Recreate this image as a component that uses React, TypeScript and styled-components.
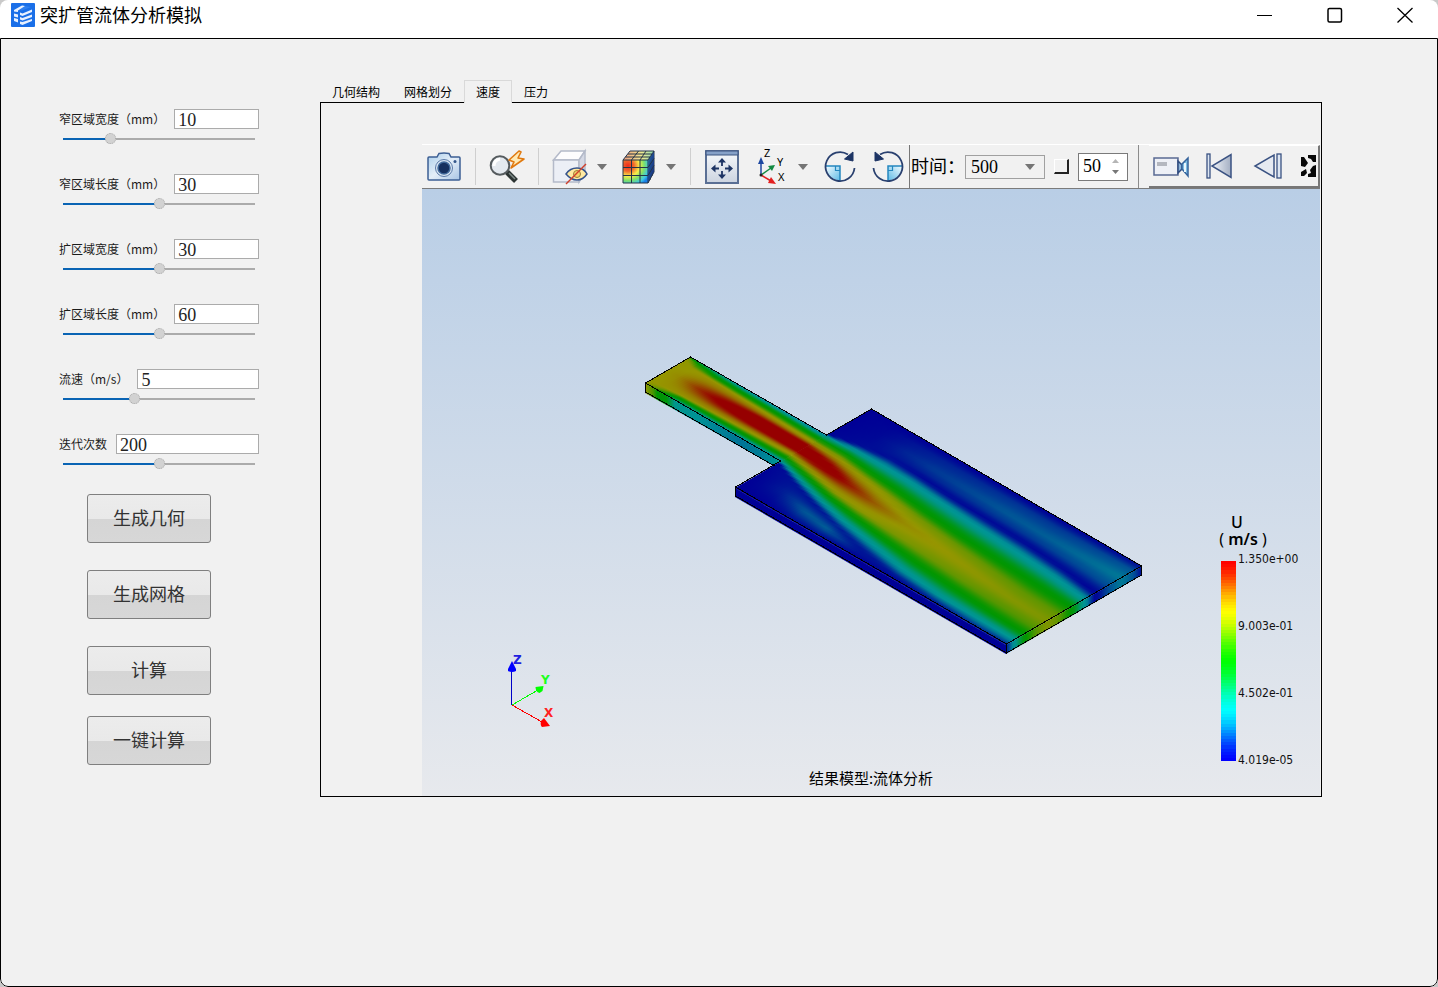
import React, { useId, useState } from 'react';
import styled, { createGlobalStyle } from 'styled-components';

const sans = `'Noto Sans CJK SC', 'Noto Sans', sans-serif`;
const serif = `'Liberation Serif', 'Noto Sans CJK SC', serif`;

const GlobalStyle = createGlobalStyle`
  *, *::before, *::after { box-sizing: border-box; }
  body { margin: 0; background: #c9c9c9; font-family: ${sans}; color: #000; }
  button, input, select { font: inherit; color: inherit; }
`;

const Window = styled.div`
  display: flex;
  flex-direction: column;
  min-height: 100vh;
  background: #fff;
  border-radius: 8px;
  overflow: hidden;
`;

const TitleBar = styled.header`
  display: flex;
  align-items: center;
  height: 38px;
  padding: 0 11px 8px;
  gap: 5px;
`;

const Title = styled.h1`
  flex: 1;
  margin: 0;
  padding-bottom: 2px;
  font-size: 18px;
  font-weight: 400;
  line-height: 24px;
`;

const CaptionButton = styled.button`
  display: grid;
  place-items: center;
  width: 65px;
  height: 30px;
  padding: 0;
  border: 0;
  background: none;
`;

const CaptionButtons = styled.div`
  display: flex;
  gap: 5px;
  margin-right: -10px;
`;

const Content = styled.main`
  flex: 1;
  display: flex;
  align-items: flex-start;
  gap: 61px;
  padding: 41px 115px 40px 58px;
  background: #f1f1f1;
  border: 1px solid #000;
  border-radius: 0 0 8px 8px;
`;

const Sidebar = styled.form`
  flex: none;
  width: 200px;
  padding-top: 29px;
`;

const Field = styled.div`
  height: 65px;
`;

const FieldRow = styled.div`
  display: flex;
  align-items: center;
  gap: 9px;
  height: 20px;
`;

const FieldLabel = styled.label`
  flex: none;
  font-size: 12px;
  line-height: 20px;
  color: #1c1c1c;
`;

const FieldInput = styled.input`
  flex: 1;
  min-width: 0;
  height: 20px;
  padding: 2px 3px 0;
  border: 1px solid #ababab;
  background: #fff;
  font-family: ${serif};
  font-size: 18px;
  line-height: 18px;
  color: #222;
  outline: none;
`;

const Range = styled.input`
  display: block;
  width: 192px;
  height: 11px;
  margin: 4px 4px 0;
  appearance: none;
  background: linear-gradient(#0a64b4, #0a64b4) 0 5px / var(--filled) 2px no-repeat,
    linear-gradient(#ababab, #ababab) 0 5px / 100% 2px no-repeat;
  &::-webkit-slider-thumb {
    appearance: none;
    width: 11px;
    height: 11px;
    border: 1px dotted #a8a8a8;
    border-radius: 50%;
    background: #d2d2d2;
  }
`;

const Actions = styled.div`
  display: flex;
  flex-direction: column;
  gap: 21px;
  width: 124px;
  margin: -5px 0 0 28px;
`;

const ActionGroup = styled.div`
  display: flex;
  flex-direction: column;
  gap: 27px;
`;

const ActionButton = styled.button`
  height: 49px;
  padding: 0 0 3px;
  border: 1px solid #7f7f7f;
  border-radius: 3px;
  background: linear-gradient(#ececec 0, #e9e9e9 51%, #d5d5d5 52%, #d7d7d7 100%);
  font-family: ${serif};
  font-size: 18px;
  color: #333;
`;

const TabView = styled.section`
  flex: 1;
  min-width: 0;
`;

const TabList = styled.div`
  display: flex;
  height: 22px;
`;

const Tab = styled.button<{ $active: boolean }>`
  position: relative;
  height: 23px;
  padding: 0 11px;
  border: 1px solid ${p => (p.$active ? '#d9d9d9' : 'transparent')};
  border-bottom: 0;
  background: ${p => (p.$active ? '#f1f1f1' : 'transparent')};
  font-size: 12px;
  line-height: 22px;
`;

const TabPanel = styled.div`
  padding: 41px 1px 0 101px;
  border: 1px solid #000;
`;

const Viewer = styled.div`
  display: flex;
  flex-direction: column;
`;

const Toolbar = styled.div`
  display: flex;
  align-items: stretch;
  height: 45px;
  border-top: 1px solid #fff;
  border-bottom: 1px solid #7b7b7b;
  svg { overflow: visible; }
`;

const ToolGroup = styled.div`
  display: flex;
  align-items: center;
  gap: 5px;
`;

const SplitTool = styled.div`
  display: flex;
  align-items: center;
`;

const RotatePair = styled.div`
  display: flex;
  gap: 4px;
  margin-right: -1px;
`;

const ToolButton = styled.button`
  display: grid;
  place-items: center;
  width: 44px;
  height: 40px;
  padding: 0;
  border: 0;
  background: none;
`;

const MenuButton = styled.button`
  display: grid;
  place-items: center;
  width: 20px;
  height: 40px;
  padding: 0;
  border: 0;
  background: none;
`;

const MoreButton = styled(MenuButton)`
  width: 30px;
`;

const Separator = styled.span`
  width: 1px;
  height: 37px;
  margin: 0 4px;
  background: #cfcfcf;
`;

const TimeGroup = styled.div`
  display: flex;
  align-items: center;
  flex: none;
  padding: 0 10px 0 1px;
  border-left: 1px solid #777;
  border-right: 1px solid #8c8c8c;
`;

const TimeLabel = styled.label`
  width: 54px;
  white-space: nowrap;
  font-family: ${serif};
  font-size: 18px;
  line-height: 24px;
`;

const SelectBox = styled.div`
  display: grid;
  align-items: center;
  width: 80px;
  height: 24px;
  border: 1px solid #a0a0a0;
  svg, select { grid-area: 1 / 1; }
  svg { justify-self: end; margin-right: 9px; pointer-events: none; }
`;

const TimeSelect = styled.select`
  width: 100%;
  height: 22px;
  padding: 0 5px;
  border: 0;
  appearance: none;
  background: transparent;
  font-family: ${serif};
  font-size: 18px;
  line-height: 22px;
`;

const LoopCheck = styled.input`
  appearance: none;
  width: 15px;
  height: 15px;
  margin: 0 9px;
  border: 1px solid #fff;
  border-right: 2px solid #222;
  border-bottom: 2px solid #222;
  background: #f1f1f1;
`;

const SpinBox = styled.div`
  display: grid;
  align-items: center;
  width: 50px;
  height: 28px;
  border: 1px solid #7a7a7a;
  background: #fff;
  svg, input { grid-area: 1 / 1; }
  svg { justify-self: end; margin-right: 8px; pointer-events: none; }
`;

const SpinInput = styled.input`
  width: 100%;
  min-width: 0;
  height: 26px;
  padding: 0 0 0 4px;
  border: 0;
  background: transparent;
  font-family: ${serif};
  font-size: 18px;
  outline: none;
  appearance: textfield;
  &::-webkit-inner-spin-button { appearance: none; }
`;

const Playback = styled.div`
  display: flex;
  align-items: center;
  flex: 1;
  min-width: 0;
  gap: 4px;
  margin-left: 10px;
  overflow: hidden;
  border: 1px solid #fff;
  border-left: 0;
  border-right: 2px solid #777;
  border-bottom: 2px solid #777;
  button { flex: none; }
`;

const Scene = styled.svg`
  display: block;
  width: 100%;
  height: auto;
`;

/* ---------- velocity field ---------- */

type Profile = [number, number][];
interface Section { s: number; profile: Profile }

function colour(v: number, level: number) {
  const x = Math.max(0, Math.min(1, v)) * 4;
  const band = Math.min(3, Math.floor(x));
  const r = x - band;
  const f = 0.5 * r + 0.5 * r * r * (3 - 2 * r);
  const rgb = [[0, f, 1], [0, 1, 1 - f], [f, 1, 0], [1, 1 - f, 0]][band];
  return `rgb(${rgb.map(c => Math.round(c * level)).join(',')})`;
}

function profileAt(sections: Section[], s: number): Profile {
  let i = 0;
  while (i < sections.length - 2 && sections[i + 1].s < s) i++;
  const a = sections[i];
  const b = sections[i + 1];
  const f = Math.max(0, Math.min(1, (s - a.s) / (b.s - a.s)));
  return a.profile.map(([t, v], k) => [t + (b.profile[k][0] - t) * f, v + (b.profile[k][1] - v) * f]);
}

function valueAt(profile: Profile, t: number) {
  for (let k = 0; k < profile.length - 1; k++) {
    const [t0, v0] = profile[k];
    const [t1, v1] = profile[k + 1];
    if (t <= t1) {
      const f = t1 === t0 ? 1 : (t - t0) / (t1 - t0);
      const eased = 0.5 * f + 0.5 * f * f * (3 - 2 * f);
      return v0 + (v1 - v0) * eased;
    }
  }
  return profile[profile.length - 1][1];
}

/* Rounds off the recirculation zone: its peak is the second point of each profile. */
function broaden({ s, profile }: Section): Section {
  const [[t0, v0], [t1, v1], [t2, v2], ...rest] = profile;
  return {
    s,
    profile: [
      [t0, v0],
      [t0 + 0.45 * (t1 - t0), v0 + 0.7 * (v1 - v0)],
      [t1, v1],
      [t1 + 0.45 * (t2 - t1), v1 + 0.3 * (v2 - v1)],
      [t2, v2],
      ...rest,
    ],
  };
}

const inlet: Section[] = [
  { s: 0, profile: [[0, 0.5], [0.04, 0.7], [0.1, 0.73], [0.5, 0.75], [0.9, 0.74], [0.96, 0.74], [1, 0.7]] },
  { s: 0.08, profile: [[0, 0.4], [0.08, 0.58], [0.2, 0.74], [0.5, 0.78], [0.85, 0.76], [0.95, 0.68], [1, 0.55]] },
  { s: 0.22, profile: [[0, 0.3], [0.1, 0.5], [0.22, 0.77], [0.52, 0.9], [0.82, 0.77], [0.91, 0.5], [1, 0.32]] },
  { s: 0.4, profile: [[0, 0.24], [0.11, 0.5], [0.24, 0.78], [0.52, 1.03], [0.79, 0.78], [0.9, 0.5], [1, 0.26]] },
  { s: 0.65, profile: [[0, 0.22], [0.12, 0.5], [0.26, 0.78], [0.5, 1.18], [0.76, 0.78], [0.89, 0.5], [1, 0.24]] },
  { s: 1, profile: [[0, 0.2], [0.14, 0.5], [0.28, 0.76], [0.5, 1.24], [0.74, 0.76], [0.87, 0.5], [1, 0.22]] },
];

const outletSections: Section[] = [
  { s: 0, profile: [[0, 0], [0.15, 0], [0.32, 0.01], [0.335, 0.22], [0.38, 0.5], [0.427, 0.76], [0.5, 1.24], [0.58, 0.76], [0.623, 0.5], [0.665, 0.22], [0.68, 0.02], [0.85, 0], [1, 0]] },
  { s: 0.1, profile: [[0, 0], [0.15, 0.02], [0.27, 0.03], [0.32, 0.25], [0.377, 0.5], [0.435, 0.76], [0.53, 1.1], [0.615, 0.76], [0.665, 0.5], [0.713, 0.25], [0.75, 0.04], [0.84, 0.06], [1, 0]] },
  { s: 0.2, profile: [[0, 0], [0.15, 0.07], [0.24, 0.03], [0.316, 0.25], [0.403, 0.5], [0.465, 0.75], [0.56, 0.95], [0.655, 0.75], [0.71, 0.5], [0.765, 0.25], [0.81, 0.04], [0.89, 0.14], [1, 0.02]] },
  { s: 0.3, profile: [[0, 0], [0.155, 0.1], [0.245, 0.02], [0.318, 0.25], [0.42, 0.5], [0.49, 0.73], [0.585, 0.86], [0.68, 0.73], [0.74, 0.5], [0.81, 0.25], [0.86, 0.06], [0.92, 0.15], [1, 0.02]] },
  { s: 0.43, profile: [[0, 0], [0.158, 0.12], [0.265, 0.02], [0.336, 0.25], [0.45, 0.5], [0.52, 0.69], [0.6, 0.78], [0.7, 0.7], [0.775, 0.5], [0.85, 0.25], [0.92, 0.05], [0.96, 0.04], [1, 0]] },
  { s: 0.57, profile: [[0, 0], [0.16, 0.14], [0.275, 0.02], [0.355, 0.25], [0.475, 0.5], [0.55, 0.68], [0.625, 0.75], [0.72, 0.68], [0.808, 0.5], [0.9, 0.25], [0.97, 0.04], [0.98, 0.03], [1, 0]] },
  { s: 0.72, profile: [[0, 0], [0.165, 0.15], [0.285, 0.02], [0.37, 0.25], [0.492, 0.5], [0.58, 0.67], [0.66, 0.73], [0.75, 0.66], [0.83, 0.5], [0.932, 0.25], [0.98, 0.08], [0.99, 0.05], [1, 0.02]] },
  { s: 0.87, profile: [[0, 0.01], [0.16, 0.17], [0.31, 0.02], [0.39, 0.25], [0.506, 0.5], [0.61, 0.66], [0.69, 0.71], [0.77, 0.64], [0.85, 0.5], [0.935, 0.25], [0.98, 0.12], [0.99, 0.08], [1, 0.04]] },
  { s: 1, profile: [[0, 0.03], [0.15, 0.19], [0.345, 0.01], [0.42, 0.25], [0.52, 0.5], [0.62, 0.66], [0.7, 0.7], [0.78, 0.64], [0.86, 0.5], [0.94, 0.25], [0.98, 0.12], [0.99, 0.08], [1, 0.04]] },
];

const outlet = outletSections.map(broaden);

const SAMPLES = 48;

function Surface({ id, sections, slices, matrix }: { id: string; sections: Section[]; slices: number; matrix: string }) {
  const step = 1 / slices;
  const cuts = Array.from({ length: slices }, (_, i) => i);
  return (
    <g transform={matrix}>
      {cuts.map(i => {
        const profile = profileAt(sections, (i + 0.5) * step);
        return (
          <React.Fragment key={i}>
            <linearGradient id={`${id}${i}`} x1="0" y1="0" x2="0" y2="1">
              {Array.from({ length: SAMPLES + 1 }, (_, k) => (
                <stop key={k} offset={k / SAMPLES} stopColor={colour(valueAt(profile, k / SAMPLES), 150)} />
              ))}
            </linearGradient>
            <rect x={i * step} y="0" width={Math.min(step * 2, 1 - i * step)} height="1" fill={`url(#${id}${i})`} />
          </React.Fragment>
        );
      })}
    </g>
  );
}

const exitProfile = outlet[outlet.length - 1].profile;
const BANDS = 64;

function ResultScene() {
  return (
    <Scene viewBox="422 189 898 607" role="img" aria-label="结果模型:流体分析">
      <defs>
        <linearGradient id="sky" x1="0" y1="0" x2="0" y2="1">
          <stop offset="0" stopColor="#b9cee6" />
          <stop offset="1" stopColor="#e7e9ed" />
        </linearGradient>
        <linearGradient id="inletSide">
          <stop offset="0" stopColor="#969600" />
          <stop offset=".06" stopColor="#469600" />
          <stop offset=".09" stopColor="#009600" />
          <stop offset=".16" stopColor="#00960a" />
          <stop offset=".22" stopColor="#00968c" />
          <stop offset=".4" stopColor="#009196" />
          <stop offset=".7" stopColor="#007396" />
          <stop offset=".85" stopColor="#007d96" />
          <stop offset="1" stopColor="#009696" />
        </linearGradient>
        <linearGradient id="exitFace" x1="1" y1="0" x2="0" y2="0">
          {Array.from({ length: 41 }, (_, k) => (
            <stop key={k} offset={k / 40} stopColor={colour(valueAt(exitProfile, k / 40), 150)} />
          ))}
        </linearGradient>
      </defs>
      <rect x="422" y="189" width="898" height="607" fill="url(#sky)" />

      <path d="M645 383L780 461L774 466L645 393Z" fill="url(#inletSide)" />
      <path d="M735 488L1006 645V654L735 497Z" fill="#000096" />
      <path d="M1006 645L1142 566V575L1006 654Z" fill="url(#exitFace)" />
      <Surface id="in" sections={inlet} slices={68} matrix="matrix(136 78.5 -45 26 690 357)" />
      <Surface id="out" sections={outlet} slices={130} matrix="matrix(271 157 -136 79 871 409)" />
      <path
        d="M780.5 461L645.500 383L690.500 357L826.500 435L871.500 409L1141.500 566L1006.500 644L735.500 487ZM645.500 383V392L774.500 466M735.500 487V496L1006.500 653L1141.500 575V566M1006.500 644V653"
        fill="none"
        stroke="#000"
        shapeRendering="crispEdges"
      />

      <g fontFamily="'DejaVu Sans', sans-serif" fontSize="12" fontWeight="700">
        <path d="M511.500 705V670" stroke="#0000c8" />
        <path d="M512 705L538 690" stroke="#0f0" shapeRendering="crispEdges" />
        <path d="M512 705L542 722" stroke="#f00" shapeRendering="crispEdges" />
        <path d="M512 661l4 8v2q-4 2-8 0v-2z" fill="#00f" />
        <path d="M535.500 687l8-1-1 5-3 2q-4-1-4-6z" fill="#0f0" />
        <path d="M541 721l3-3 6 8-8 1q-2-2-1-6z" fill="#f00" />
        <text x="513" y="664" fill="#2020e0">Z</text>
        <text x="541" y="684" fill="#1eff1e">Y</text>
        <text x="544" y="717" fill="#ff2020">X</text>
      </g>

      <g fontFamily="'Noto Sans', sans-serif" fontSize="16" textAnchor="middle">
        <text x="1237" y="528" fontWeight="500">U</text>
        <text x="1243" y="545" fontWeight="600">
          <tspan fontWeight="400">( </tspan>m/s<tspan fontWeight="400"> )</tspan>
        </text>
      </g>
      <g shapeRendering="crispEdges">
        {Array.from({ length: BANDS }, (_, i) => (
          <rect
            key={i}
            x="1221"
            y={561 + Math.round((i * 200) / BANDS)}
            width="15"
            height={i === BANDS - 1 ? 3 : 4}
            fill={colour(1 - i / (BANDS - 1), 255)}
          />
        ))}
      </g>
      <g fontFamily="'DejaVu Sans Condensed', 'DejaVu Sans', sans-serif" fontSize="12" fill="#111">
        <text x="1238" y="563">1.350e+00</text>
        <text x="1238" y="630">9.003e-01</text>
        <text x="1238" y="697">4.502e-01</text>
        <text x="1238" y="764">4.019e-05</text>
      </g>
      <text x="871" y="784" textAnchor="middle" fontFamily={sans} fontSize="15">结果模型:流体分析</text>
    </Scene>
  );
}

/* ---------- icons ---------- */

const LogoIcon = () => (
  <svg width="24" height="24" viewBox="0 0 24 24" aria-hidden="true">
    <rect width="24" height="24" rx="1" fill="#1a6fe8" />
    <path d="M3 6.500l8-4 9 1.500-9 3.500z" fill="#2f80f0" />
    <path d="M3 7l8-4.500 3 .5-7 4.500v1.500L3 8.500zM3 10.500l4 1v3l-4-1zM3 15l4 1v3.500L3 18z" fill="#e8f1ff" />
    <path d="M9 9.500l2.500 1L21 6.500V9l-9.500 4L9 12zM9 14l2.500 1 9.500-3.500V14l-9.500 3.500L9 16.500zM9 18.500l2.500.5 9.500-3v2l-9.500 4L9 21z" fill="#e8f1ff" />
  </svg>
);

const CameraIcon = () => (
  <svg width="34" height="30" viewBox="0 0 34 30" aria-hidden="true">
    <defs>
      <linearGradient id="cam" x1="0" y1="0" x2="1" y2="1">
        <stop offset="0" stopColor="#a9cdea" /><stop offset=".5" stopColor="#e4eef8" /><stop offset="1" stopColor="#a8c4e4" />
      </linearGradient>
    </defs>
    <path d="M2 5h8l2-3.500q5-1 10 0L24 5h8q1 0 1 1v21q0 1-1 1H2q-1 0-1-1V6q0-1 1-1z" fill="url(#cam)" stroke="#3d5f94" strokeWidth="1.500" />
    <circle cx="17" cy="16" r="8.500" fill="#d9e6f3" stroke="#5b7aa8" />
    <circle cx="17" cy="16" r="6" fill="#16305f" stroke="#41699b" strokeWidth="1.500" />
    <circle cx="28" cy="9.500" r="1.500" fill="#33568a" />
  </svg>
);

const ProbeIcon = () => (
  <svg width="36" height="34" viewBox="0 0 36 34" aria-hidden="true">
    <path d="M18 22l9 9" stroke="#2c3433" strokeWidth="5.500" />
    <path d="M20 23l6 6" stroke="#7d8987" strokeWidth="1.500" />
    <circle cx="11" cy="15.500" r="9.300" fill="#e4e9ef" stroke="#555b5e" strokeWidth="2" />
    <path d="M5 16q0-6 6-7" fill="none" stroke="#fff" strokeWidth="3" />
    <path d="M30 1l-10 9 5 2-3 6 13-9-6-1 3-6z" fill="#ffe9b4" stroke="#e0790f" strokeWidth="1.600" strokeLinejoin="round" />
  </svg>
);

const HideIcon = () => (
  <svg width="36" height="36" viewBox="0 0 36 36" aria-hidden="true">
    <path d="M1.500 11L9 2h24l-6 9z" fill="#fdfdfe" stroke="#b4bac9" strokeWidth="1.500" />
    <path d="M1.500 11H27v22H1.500z" fill="#eceff6" stroke="#b4bac9" strokeWidth="1.500" />
    <path d="M27 11l6-9v22l-6 9z" fill="#d5d9e5" stroke="#b4bac9" strokeWidth="1.500" />
    <path d="M14 25q4-6 11-6t10 6q-4 6-10 6t-11-6z" fill="#ffe9a2" stroke="#34528a" strokeWidth="1.500" />
    <circle cx="25" cy="25" r="3.500" fill="#f7d06a" stroke="#99803a" />
    <path d="M14 35L34 15" stroke="#d0402c" strokeWidth="1.500" />
  </svg>
);

const ContourIcon = () => (
  <svg width="34" height="34" viewBox="0 0 34 34" aria-hidden="true">
    <defs>
      <radialGradient id="heat" cx=".2" cy=".25" r=".95">
        <stop offset="0" stopColor="#ee2a1c" /><stop offset=".25" stopColor="#f0682c" /><stop offset=".48" stopColor="#f7ee4a" />
        <stop offset=".68" stopColor="#7de06a" /><stop offset=".88" stopColor="#3cc8e6" /><stop offset="1" stopColor="#1a80e8" />
      </radialGradient>
      <linearGradient id="lid"><stop offset="0" stopColor="#ef9a7c" /><stop offset=".6" stopColor="#f2ec92" /><stop offset="1" stopColor="#8fdcb0" /></linearGradient>
      <linearGradient id="flank" x1="0" y1="0" x2="1" y2="1"><stop offset="0" stopColor="#49c9e0" /><stop offset=".4" stopColor="#1864dd" /><stop offset="1" stopColor="#1028b0" /></linearGradient>
    </defs>
    <path d="M1 10L8 1h24l-6 9z" fill="url(#lid)" />
    <path d="M1 10h25v23H1z" fill="url(#heat)" />
    <path d="M26 10l6-9v21l-6 11z" fill="url(#flank)" />
    <path
      d="M1 10L8 1h24l-6 9zM1 10v23h25V10M26 33l6-11V1M1 17.500h25l6-9M1 25.500h25l6-10M9.500 33V10l7-9M18 33V10l6-9M3.500 7h24.500M6 4h24M28 30V7M30 26V4"
      fill="none"
      stroke="#243447"
      strokeWidth="1"
    />
  </svg>
);

const FitIcon = () => (
  <svg width="34" height="34" viewBox="0 0 34 34" aria-hidden="true">
    <defs><linearGradient id="fit" x1="0" y1="0" x2="0" y2="1"><stop offset="0" stopColor="#f7f9fc" /><stop offset="1" stopColor="#ccd4e0" /></linearGradient></defs>
    <rect x="1" y="1" width="32" height="32" fill="url(#fit)" stroke="#5a6f94" strokeWidth="2" />
    <path d="M1 1h32v4H1z" fill="#86a1c8" stroke="#3d5580" />
    <path d="M17 8l4 4.500h-8zM17 29l4-4.500h-8zM6 18.500l4.500-4v8zM28 18.500l-4.500-4v8z" fill="#1d3464" />
    <path d="M17 12v4M17 21v4M10 18.500h4M20 18.500h4" stroke="#1d3464" strokeWidth="1.800" />
  </svg>
);

const AxesIcon = () => (
  <svg width="28" height="36" viewBox="0 0 28 36" fontFamily="'Noto Sans', sans-serif" fontSize="11" aria-hidden="true">
    <path d="M4 26V12" stroke="#1c46a0" strokeWidth="1.500" /><path d="M4 8l3 7H1z" fill="#1c46a0" />
    <path d="M4 26l10-7" stroke="#138a42" strokeWidth="1.500" /><path d="M18 16l-7 1 4 5z" fill="#138a42" />
    <path d="M4 26l10 6" stroke="#e32020" strokeWidth="1.500" /><path d="M19 35l-8-1 3-6z" fill="#e32020" />
    <circle cx="4" cy="26" r="1.500" fill="#222" />
    <text x="7" y="8">Z</text><text x="20" y="17">Y</text><text x="21" y="32">X</text>
  </svg>
);

const RotateIcon = ({ flip = false }: { flip?: boolean }) => (
  <svg width="32" height="34" viewBox="0 1 32 34" aria-hidden="true">
    <defs><linearGradient id="quad" x1="0" y1="0" x2="1" y2="1"><stop offset="0" stopColor="#f2fbff" /><stop offset="1" stopColor="#5fbbe6" /></linearGradient></defs>
    <g transform={flip ? 'translate(32 0) scale(-1 1)' : undefined}>
      <path d="M2 17h14v14.500Q3 30 2 17z" fill="url(#quad)" />
      <path d="M1 17h15v15" fill="none" stroke="#2487bf" strokeWidth="1.500" />
      <path d="M11.500 17v4.500H16" fill="none" stroke="#2487bf" strokeWidth="1.200" />
      <path d="M24 5.500A14.500 14.500 0 1 0 30.500 19" fill="none" stroke="#29406f" strokeWidth="1.800" />
      <path d="M29 3v9l-8.500-2z" fill="#1d3464" stroke="#1d3464" strokeLinejoin="round" />
    </g>
  </svg>
);

const DownArrow = () => (
  <svg width="10" height="6" viewBox="0 0 10 6" aria-hidden="true"><path d="M0 0h10L5 6z" fill="#757575" /></svg>
);

const SpinArrows = () => (
  <svg width="7" height="16" viewBox="0 0 7 16" aria-hidden="true">
    <path d="M0 4l3.500-4L7 4z" fill="#b5b5b5" /><path d="M0 11h7l-3.500 4z" fill="#777" />
  </svg>
);

const VideoIcon = () => (
  <svg width="36" height="22" viewBox="0 0 36 22" aria-hidden="true">
    <rect x="1" y="3" width="24" height="17" fill="#eef0f6" stroke="#596a93" strokeWidth="1.500" />
    <rect x="4" y="7" width="10" height="4" fill="#b4b7bf" />
    <path d="M25 6l4 4v4l-4 4z" fill="#8eb4d8" stroke="#2f4c80" strokeWidth="1.500" />
    <path d="M29 9l6-6v18l-6-7z" fill="#7dbbe2" stroke="#35639c" strokeWidth="1.500" />
    <path d="M32 8v9" stroke="#e9f6fd" strokeWidth="2" />
  </svg>
);

const FirstIcon = () => (
  <svg width="26" height="26" viewBox="0 0 26 26" aria-hidden="true">
    <defs><linearGradient id="tri"><stop offset="0" stopColor="#f0f3f8" /><stop offset="1" stopColor="#a4afc3" /></linearGradient></defs>
    <rect x="1" y="1" width="3" height="24" fill="#dde6f2" stroke="#3a5282" strokeWidth="1.300" />
    <path d="M25 1.500v23L6 13z" fill="url(#tri)" stroke="#3a5282" strokeWidth="1.500" />
  </svg>
);

const StepBackIcon = () => (
  <svg width="29" height="26" viewBox="0 0 29 26" aria-hidden="true">
    <path d="M21 2v22L2 13z" fill="#e6eaf1" stroke="#3a5282" strokeWidth="1.500" />
    <rect x="24" y="1" width="4" height="24" fill="#dde6f2" stroke="#3a5282" strokeWidth="1.300" />
  </svg>
);

const MoreIcon = () => (
  <svg width="15" height="22" viewBox="0 0 15 22" aria-hidden="true">
    <path d="M0 2h3l4 6-3 4-4-1zM7 0h8v7l-3 0-2-3-3-1zM15 10v12H7v-3l3-1-1-3 3-4zM0 17l5-3 1 4-3 3H0z" fill="#080808" />
  </svg>
);

/* ---------- controls ---------- */

interface FieldProps { label: string; initial: number; min: number; max: number }

function ParameterField({ label, initial, min, max }: FieldProps) {
  const id = useId();
  const [value, setValue] = useState(initial);
  const filled = { '--filled': `${((value - min) / (max - min)) * 100}%` } as React.CSSProperties;
  return (
    <Field>
      <FieldRow>
        <FieldLabel htmlFor={id}>{label}</FieldLabel>
        <FieldInput id={id} value={value} onChange={e => setValue(Number(e.target.value) || 0)} />
      </FieldRow>
      <Range type="range" aria-label={label} min={min} max={max} value={value} style={filled} onChange={e => setValue(Number(e.target.value))} />
    </Field>
  );
}

const fields: FieldProps[] = [
  { label: '窄区域宽度（mm）', initial: 10, min: 1, max: 40 },
  { label: '窄区域长度（mm）', initial: 30, min: 10, max: 50 },
  { label: '扩区域宽度（mm）', initial: 30, min: 10, max: 50 },
  { label: '扩区域长度（mm）', initial: 60, min: 20, max: 100 },
  { label: '流速（m/s）', initial: 5, min: 1, max: 12 },
  { label: '迭代次数', initial: 200, min: 0, max: 400 },
];

const tabs = ['几何结构', '网格划分', '速度', '压力'];

function ViewerToolbar() {
  const [steps, setSteps] = useState(50);
  return (
    <Toolbar role="toolbar">
      <ToolGroup>
        <ToolButton aria-label="截图"><CameraIcon /></ToolButton>
        <Separator />
        <ToolButton aria-label="探测"><ProbeIcon /></ToolButton>
        <Separator />
        <SplitTool>
          <ToolButton aria-label="显示隐藏"><HideIcon /></ToolButton>
          <MenuButton aria-label="显示选项"><DownArrow /></MenuButton>
        </SplitTool>
        <SplitTool>
          <ToolButton aria-label="云图"><ContourIcon /></ToolButton>
          <MenuButton aria-label="云图选项"><DownArrow /></MenuButton>
        </SplitTool>
        <Separator />
        <ToolButton aria-label="适应窗口"><FitIcon /></ToolButton>
        <SplitTool>
          <ToolButton aria-label="视角"><AxesIcon /></ToolButton>
          <MenuButton aria-label="视角选项"><DownArrow /></MenuButton>
        </SplitTool>
        <RotatePair>
          <ToolButton aria-label="顺时针旋转"><RotateIcon /></ToolButton>
          <ToolButton aria-label="逆时针旋转"><RotateIcon flip /></ToolButton>
        </RotatePair>
      </ToolGroup>
      <TimeGroup>
        <TimeLabel htmlFor="time">时间：</TimeLabel>
        <SelectBox>
          <TimeSelect id="time" defaultValue="500"><option>500</option></TimeSelect>
          <DownArrow />
        </SelectBox>
        <LoopCheck type="checkbox" aria-label="循环" />
        <SpinBox>
          <SpinInput type="number" aria-label="帧数" value={steps} onChange={e => setSteps(Number(e.target.value))} />
          <SpinArrows />
        </SpinBox>
      </TimeGroup>
      <Playback>
        <ToolButton aria-label="录制"><VideoIcon /></ToolButton>
        <ToolButton aria-label="第一帧"><FirstIcon /></ToolButton>
        <ToolButton aria-label="上一帧"><StepBackIcon /></ToolButton>
        <MoreButton aria-label="更多"><MoreIcon /></MoreButton>
      </Playback>
    </Toolbar>
  );
}

export default function App() {
  const [active, setActive] = useState('速度');
  return (
    <>
      <GlobalStyle />
      <Window>
        <TitleBar>
          <LogoIcon />
          <Title>突扩管流体分析模拟</Title>
          <CaptionButtons>
            <CaptionButton aria-label="最小化">
              <svg width="16" height="16" viewBox="0 0 16 16"><path d="M0 8.500h15" stroke="#000" /></svg>
            </CaptionButton>
            <CaptionButton aria-label="最大化">
              <svg width="16" height="16" viewBox="0 0 16 16"><rect x="1" y="1.500" width="13.500" height="13.500" rx="1.500" fill="none" stroke="#000" strokeWidth="1.500" /></svg>
            </CaptionButton>
            <CaptionButton aria-label="关闭">
              <svg width="16" height="16" viewBox="0 0 16 16"><path d="M.5 1l15 14.500M15.500 1L.5 15.500" stroke="#000" strokeWidth="1.300" /></svg>
            </CaptionButton>
          </CaptionButtons>
        </TitleBar>
        <Content>
          <Sidebar onSubmit={e => e.preventDefault()}>
            {fields.map(field => <ParameterField key={field.label} {...field} />)}
            <Actions>
              <ActionGroup>
                <ActionButton type="button">生成几何</ActionButton>
                <ActionButton type="button">生成网格</ActionButton>
                <ActionButton type="button">计算</ActionButton>
              </ActionGroup>
              <ActionButton type="button">一键计算</ActionButton>
            </Actions>
          </Sidebar>
          <TabView>
            <TabList role="tablist">
              {tabs.map(tab => (
                <Tab key={tab} role="tab" aria-selected={tab === active} $active={tab === active} onClick={() => setActive(tab)}>{tab}</Tab>
              ))}
            </TabList>
            <TabPanel role="tabpanel">
              <Viewer>
                <ViewerToolbar />
                <ResultScene />
              </Viewer>
            </TabPanel>
          </TabView>
        </Content>
      </Window>
    </>
  );
}
